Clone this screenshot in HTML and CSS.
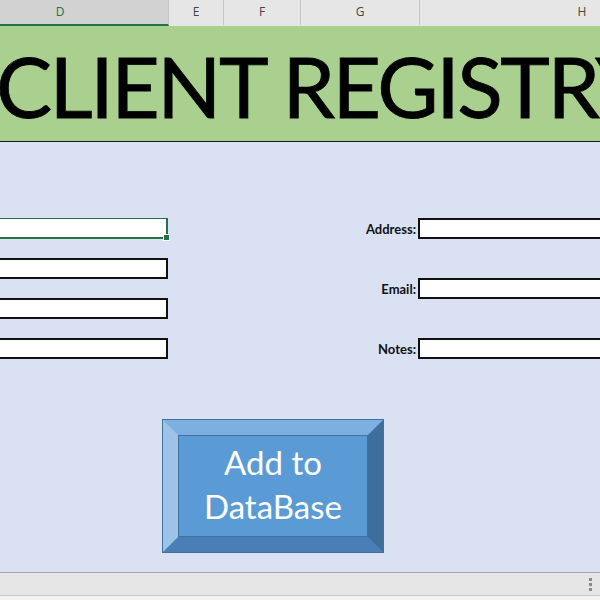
FILE: index.html
```html
<!DOCTYPE html>
<html>
<head>
<meta charset="utf-8">
<link rel="stylesheet" href="styles.css">
</head>
<body>
<div class="page">
  <div class="colhead">
    <div class="col col-d sel">D</div>
    <div class="col col-e">E</div>
    <div class="col col-f">F</div>
    <div class="col col-g">G</div>
    <div class="col col-h">H</div>
  </div>
  <div class="banner"><span class="title">CLIENT REGISTRY</span></div>
  <div class="sheet">
    <div class="fields">
      <div class="leftcol">
        <div class="box box-sel"><span class="handle"></span></div>
        <div class="box"></div>
        <div class="box"></div>
        <div class="box"></div>
      </div>
      <div class="rightcol">
        <div class="row"><span class="label">Address:</span><div class="box wide"></div></div>
        <div class="row"><span class="label">Email:</span><div class="box wide"></div></div>
        <div class="row"><span class="label">Notes:</span><div class="box wide"></div></div>
      </div>
    </div>
    <div class="btn"><div class="face">Add to<br>DataBase</div></div>
  </div>
  <div class="statusbar"><span class="grip"><i></i><i></i><i></i></span></div>
  <div class="bottomstrip"></div>
</div>
</body>
</html>
```
FILE: styles.css
```css
html, body { margin: 0; padding: 0; }
body { width: 600px; height: 600px; overflow: hidden; background: #f3f2f1; }
.page { width: 600px; overflow: hidden; }

.colhead {
  display: flex;
  height: 26px;
  background: #e6e6e6;
  font-family: "Open Sans", "Liberation Sans", sans-serif;
  font-size: 12px;
  color: #444;
  white-space: nowrap;
}
.col {
  flex: none;
  box-sizing: border-box;
  text-align: center;
  line-height: 24px;
  border-right: 1px solid #c6c6c6;
  border-bottom: 2px solid #e6e6e6;
}
.col.sel { background: #d2d2d2; border-bottom-color: #217346; color: #217346; }
.col-d { width: 217px; margin-left: -48px; }
.col-e { width: 55px; }
.col-f { width: 77px; }
.col-g { width: 119px; }
.col-h { width: 324px; border-right: none; }

.banner {
  height: 115px;
  background: #a9d08e;
  border-bottom: 1px solid #1a1a1a;
  display: flex;
  align-items: center;
  overflow: hidden;
  white-space: nowrap;
}
.title {
  font-family: Lato, "Open Sans", sans-serif;
  font-size: 84px;
  letter-spacing: -2.5px;
  color: #000;
  margin-left: -4px;
  line-height: 1;
  padding-top: 4px;
  -webkit-text-stroke: 0.8px #000;
}

.sheet {
  height: 430px;
  background: #d9e1f2;
  display: flex;
  flex-direction: column;
}
.fields { display: flex; padding-top: 76px; }
.leftcol {
  flex: none;
  width: 170px;
  margin-left: -2px;
  display: flex;
  flex-direction: column;
  gap: 19px;
}
.box {
  height: 21px;
  box-sizing: border-box;
  background: #fff;
  border: 2px solid #111;
  position: relative;
}
.box-sel { border: 2px solid #217346; border-width: 1px 2px 2px 1px; }
.handle {
  position: absolute;
  right: -4px;
  bottom: -4px;
  width: 5px;
  height: 5px;
  background: #217346;
  border: 1px solid #fff;
}
.rightcol {
  flex: none;
  margin-left: 172px;
  display: flex;
  flex-direction: column;
  gap: 39px;
}
.row { display: flex; align-items: center; height: 21px; }
.label {
  flex: none;
  width: 76px;
  text-align: right;
  padding-right: 2px;
  font-family: Lato, "Open Sans", sans-serif;
  font-weight: bold;
  font-size: 13px;
  color: #111;
}
.box.wide { flex: none; width: 200px; }

.btn {
  margin-top: 60px;
  margin-left: 162px;
  width: 222px;
  height: 134px;
  box-sizing: border-box;
  border: 17px solid;
  border-top-color: #7dafe0;
  border-left-color: #9dc3e6;
  border-right-color: #3e6e9b;
  border-bottom-color: #4a7eb6;
  outline: 1px solid #41719c;
  outline-offset: -1px;
}
.face {
  height: 100%;
  box-sizing: border-box;
  background: #5b9bd5;
  box-shadow: 0 0 0 1px #41719c;
  color: #fff;
  font-family: Lato, "Open Sans", sans-serif;
  font-size: 33px;
  line-height: 44px;
  text-align: center;
  padding-top: 4px;
}

.statusbar {
  height: 22px;
  background: #e6e6e6;
  border-top: 1px solid #a8a8a8;
  border-bottom: 1px solid #c8c8c8;
  display: flex;
  justify-content: flex-end;
  align-items: center;
}
.grip {
  display: flex;
  flex-direction: column;
  gap: 2px;
  margin-right: 8px;
}
.grip i { display: block; width: 3px; height: 3px; background: #8a8a8a; }
.bottomstrip { height: 4px; background: #f3f2f1; }
```
